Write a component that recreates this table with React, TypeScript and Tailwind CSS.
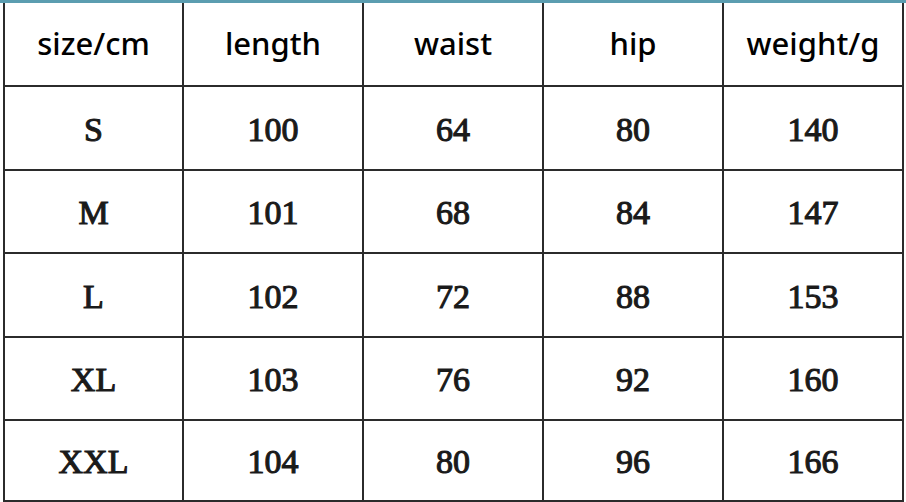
const headers = ["size/cm", "length", "waist", "hip", "weight/g"];

const rows = [
  { h: "h-[84px]", cells: ["S", "100", "64", "80", "140"] },
  { h: "h-[83px]", cells: ["M", "101", "68", "84", "147"] },
  { h: "h-[84px]", cells: ["L", "102", "72", "88", "153"] },
  { h: "h-[83px]", cells: ["XL", "103", "76", "92", "160"] },
  { h: "h-[81px]", cells: ["XXL", "104", "80", "96", "166"] },
];

const widths = ["w-[179px]", "w-[180px]", "w-[180px]", "w-[180px]", "w-[180px]"];

export default function App() {
  return (
    <div className="w-[906px] h-[502px] bg-white overflow-hidden">
      <div className="h-[3px] bg-[#5b9db0]" />
      <div className="pl-[3px]">
        <table className="border-collapse table-fixed">
          <thead>
            <tr className="h-[83px]">
              {headers.map((h, i) => (
                <th
                  key={h}
                  className={`${widths[i]} border-2 border-t-0 border-[#2b2b2b] text-center align-middle font-medium text-[31px] text-black pb-[2px] font-['Noto_Sans',sans-serif]`}
                >
                  {h}
                </th>
              ))}
            </tr>
          </thead>
          <tbody>
            {rows.map((r) => (
              <tr key={r.cells[0]} className={r.h}>
                {r.cells.map((c, i) => (
                  <td
                    key={i}
                    className={`${widths[i]} border-2 border-[#2b2b2b] text-center align-middle font-normal text-[34px] text-[#1a1a1a] pt-[2px] [-webkit-text-stroke:1.1px_#1a1a1a] font-['Liberation_Serif',serif]`}
                  >
                    {c}
                  </td>
                ))}
              </tr>
            ))}
          </tbody>
        </table>
      </div>
    </div>
  );
}
